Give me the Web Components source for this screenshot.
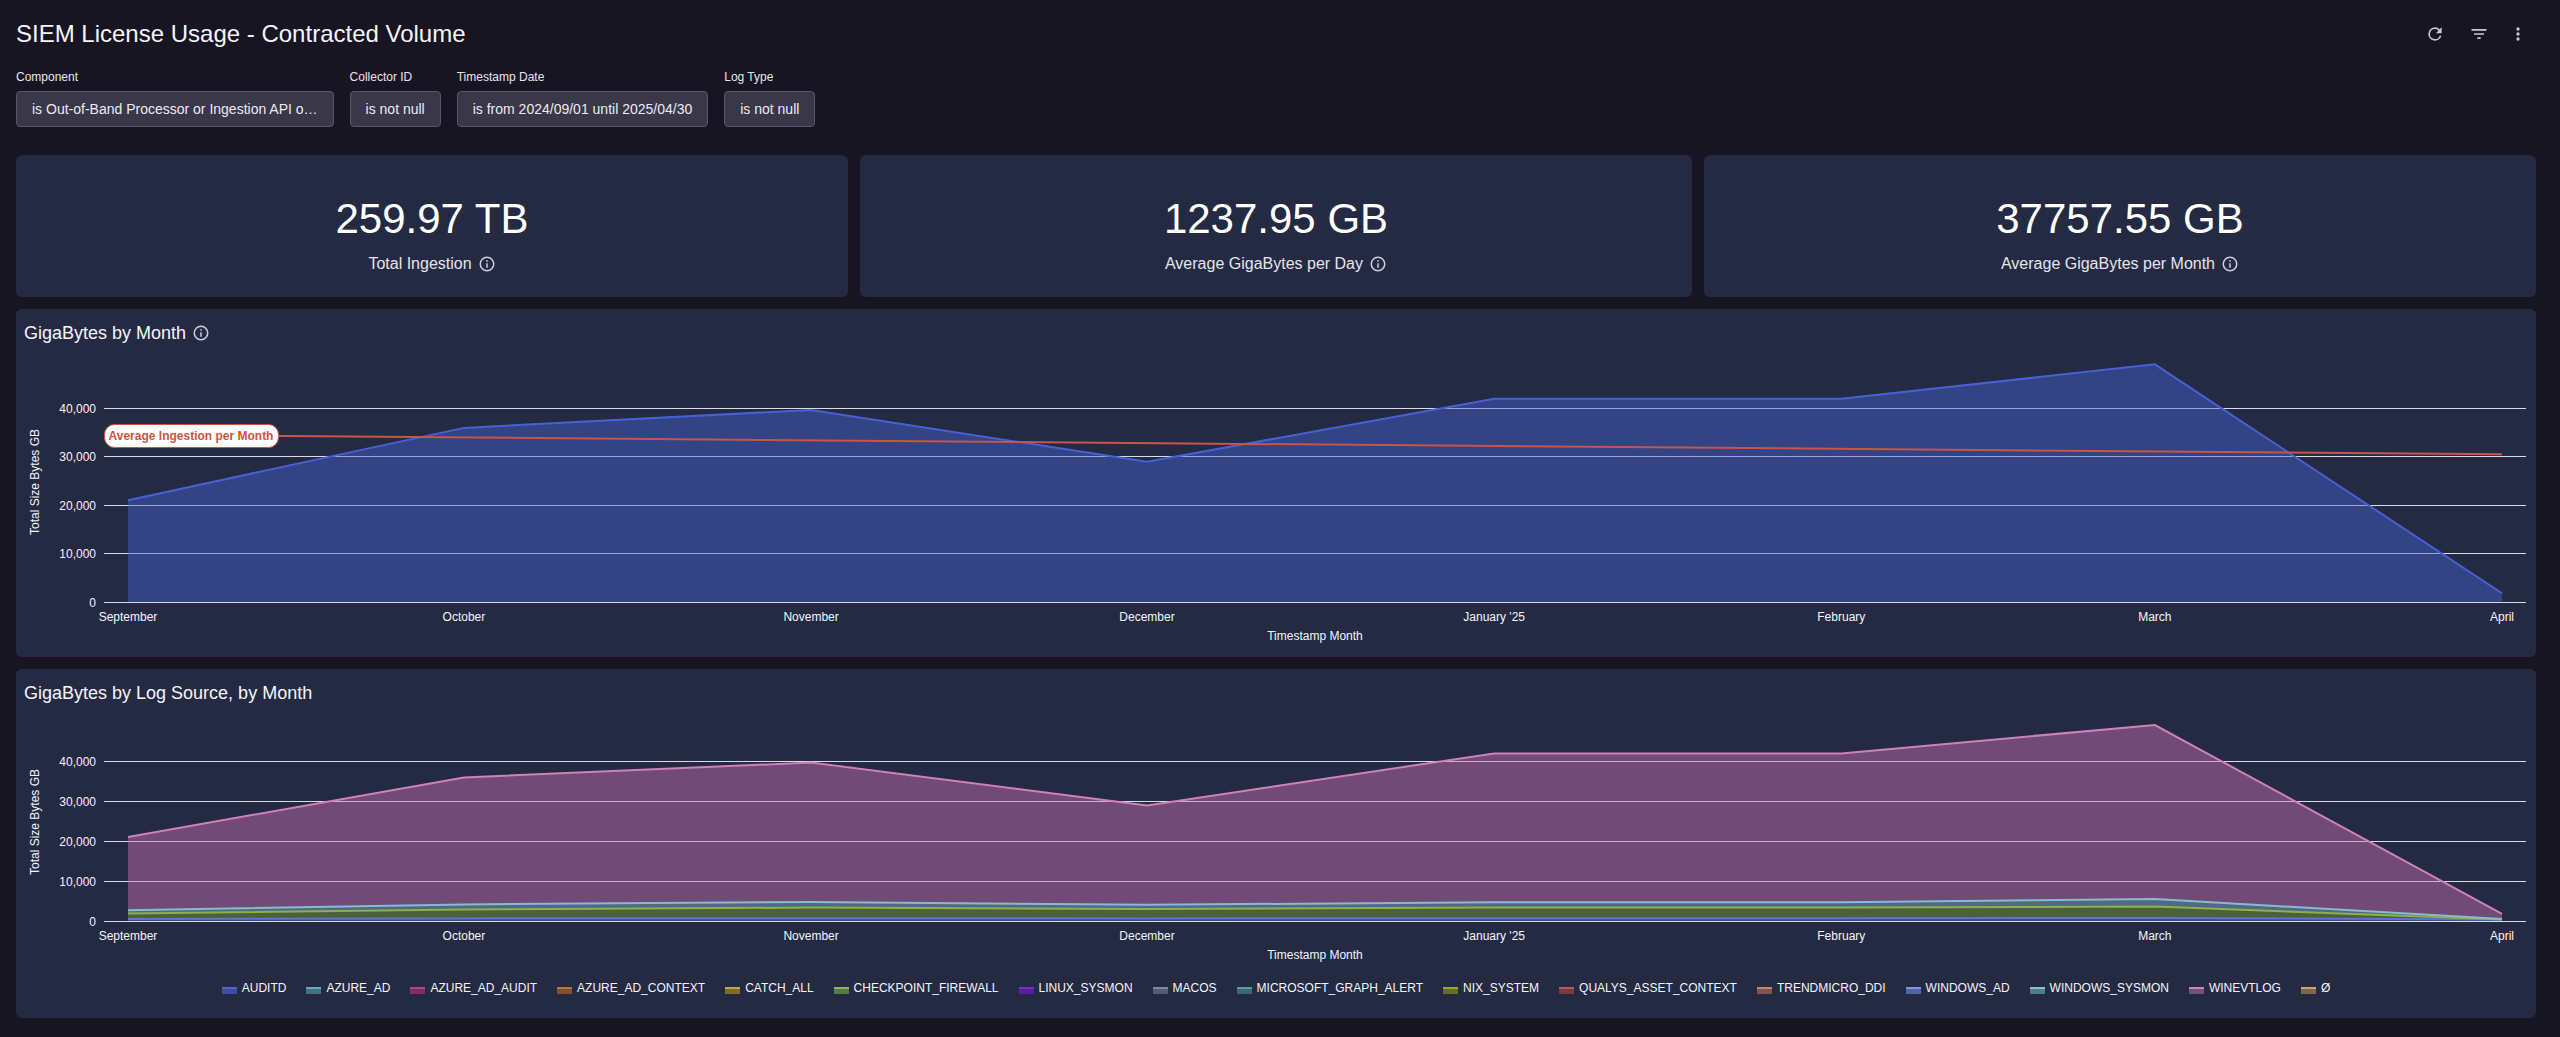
<!DOCTYPE html>
<html lang="en">
<head>
<meta charset="utf-8">
<meta name="viewport" content="width=device-width, initial-scale=1">
<title>SIEM License Usage - Contracted Volume</title>
<style>
  html { background: #181523; }
  body {
    margin: 0;
    color: #f4f4fa;
    font-family: "Liberation Sans", Arial, sans-serif;
    --panel: #252a43;
    --muted: #cfcddb;
  }
</style>
</head>
<body>
<siem-dashboard></siem-dashboard>

<script>
const ICONS = {
  refresh: 'M17.65 6.35A7.96 7.96 0 0 0 12 4a8 8 0 1 0 7.73 10h-2.08A6 6 0 1 1 12 6c1.66 0 3.14.69 4.22 1.78L13 11h7V4z',
  filter: 'M10 18h4v-2h-4zM3 6v2h18V6zm3 7h12v-2H6z',
  more: 'M12 8a2 2 0 1 0 0-4 2 2 0 0 0 0 4zm0 2a2 2 0 1 0 0 4 2 2 0 0 0 0-4zm0 6a2 2 0 1 0 0 4 2 2 0 0 0 0-4z',
  info: 'M11 7h2v2h-2zm0 4h2v6h-2zm1-9a10 10 0 1 0 0 20 10 10 0 0 0 0-20zm0 18a8 8 0 1 1 0-16 8 8 0 0 1 0 16z'
};

class DashIcon extends HTMLElement {
  connectedCallback() {
    if (this.shadowRoot) return;
    this.attachShadow({ mode: 'open' }).innerHTML = `
      <style>
        :host { display: block; width: 20px; height: 20px; flex: none; }
        svg { display: block; width: 100%; height: 100%; fill: currentColor; }
      </style>
      <svg viewBox="0 0 24 24" aria-hidden="true"><path d="${ICONS[this.getAttribute('name')]}"/></svg>`;
  }
}
customElements.define('dash-icon', DashIcon);

class InfoButton extends HTMLElement {
  connectedCallback() {
    if (this.shadowRoot) return;
    this.attachShadow({ mode: 'open' }).innerHTML = `
      <style>
        :host { display: block; flex: none; }
        button { display: block; padding: 0; border: 0; background: none; color: var(--muted); cursor: pointer; }
        dash-icon { width: 18px; height: 18px; }
      </style>
      <button type="button" aria-label="More information"><dash-icon name="info"></dash-icon></button>`;
  }
}
customElements.define('info-button', InfoButton);

class FilterChip extends HTMLElement {
  connectedCallback() {
    if (this.shadowRoot) return;
    this.attachShadow({ mode: 'open' }).innerHTML = `
      <style>
        :host { display: flex; flex-direction: column; align-items: flex-start; gap: 6px; min-width: 0; }
        label { font-size: 12px; line-height: 16px; color: #e6e5ee; }
        button {
          box-sizing: border-box; height: 36px; max-width: 320px; padding: 0 15px;
          border: 1px solid #57566a; border-radius: 4px; background: #393748; color: #eceaf4;
          font: 14px/20px "Liberation Sans", Arial, sans-serif;
          overflow: hidden; text-overflow: ellipsis; white-space: nowrap; cursor: pointer;
        }
      </style>
      <label for="value">${this.getAttribute('label')}</label>
      <button type="button" id="value"><slot></slot></button>`;
  }
}
customElements.define('filter-chip', FilterChip);

class MetricCard extends HTMLElement {
  connectedCallback() {
    if (this.shadowRoot) return;
    this.attachShadow({ mode: 'open' }).innerHTML = `
      <style>
        :host {
          display: flex; flex-direction: column; align-items: center; gap: 11px;
          padding: 40px 16px 23px; border-radius: 6px; background: var(--panel);
        }
        .value { font-size: 42px; line-height: 48px; color: #fff; }
        .caption { display: flex; align-items: center; gap: 6px; font-size: 16px; line-height: 20px; color: #e4e4ee; }
      </style>
      <div class="value"><slot></slot></div>
      <div class="caption"><span>${this.getAttribute('caption')}</span><info-button></info-button></div>`;
  }
}
customElements.define('metric-card', MetricCard);

class ChartPanel extends HTMLElement {
  connectedCallback() {
    if (this.shadowRoot) return;
    this.attachShadow({ mode: 'open' }).innerHTML = `
      <style>
        :host { display: block; padding-top: 13px; border-radius: 6px; background: var(--panel); }
        header { display: flex; align-items: center; gap: 6px; padding: 0 8px; }
        h2 { margin: 0; font-size: 18px; font-weight: 400; line-height: 22px; }
      </style>
      <header><h2>${this.getAttribute('heading')}</h2>${this.hasAttribute('info') ? '<info-button></info-button>' : ''}</header>
      <slot></slot>`;
  }
}
customElements.define('chart-panel', ChartPanel);

const MONTHS = [
  ['September', 0], ['October', 30], ['November', 61], ['December', 91],
  ["January '25", 122], ['February', 153], ['March', 181], ['April', 212]
];
const TOTALS = [21000, 35900, 39600, 28900, 41900, 41900, 49000, 1800];

/* Each layer lists the cumulative top of its band, month by month. */
const CHARTS = {
  month: {
    height: 313, top: 64, zero: 258, monthY: 277, titleY: 296, axisMid: 138,
    layers: [{ color: '#4661d5', tops: TOTALS }],
    trend: { from: 34500, to: 30450, label: 'Average Ingestion per Month' }
  },
  source: {
    height: 261, top: 57, zero: 217, monthY: 236, titleY: 255, axisMid: 118,
    layers: [
      { color: '#5c73d8', tops: [500, 650, 700, 650, 700, 700, 750, 350] },
      { color: '#8db04c', fill: '#7aa535', tops: [1900, 2850, 3350, 3000, 3350, 3400, 3600, 380] },
      { color: '#84bcd0', fill: '#8ab6d4', tops: [2700, 4150, 4750, 4050, 4700, 4700, 5500, 500] },
      { color: '#d07fbf', fill: '#ce73b6', tops: TOTALS }
    ]
  }
};

class AreaChart extends HTMLElement {
  connectedCallback() {
    if (this.shadowRoot) return;
    this.attachShadow({ mode: 'open' }).innerHTML = `
      <style>
        :host { display: block; }
        svg { display: block; width: 100%; }
        text { font-size: 12px; fill: #f4f4fa; }
        .end { text-anchor: end; }
        .mid { text-anchor: middle; }
        .grid { stroke: #d9dbe8; stroke-width: 1; }
        .line { fill: none; stroke-width: 2; }
        .area { fill-opacity: .45; }
        .tag { fill: #fff; stroke: #d0533c; }
        .tag-text { font-weight: 700; fill: #d0533c; text-anchor: middle; }
      </style>
      <svg role="img"></svg>`;
    this.draw();
    new ResizeObserver(() => this.draw()).observe(this);
  }

  draw() {
    const c = CHARTS[this.getAttribute('data')];
    const w = this.clientWidth;
    if (!w || w === this.drawn) return;
    this.drawn = w;
    const left = 88, right = w - 10, start = left + 24, end = right - 24;
    const x = day => start + (end - start) * day / 212;
    const y = value => c.zero - (c.zero - c.top) * value / 40000;
    let out = '';

    for (let v = 0; v <= 40000; v += 10000) {
      const gy = Math.floor(y(v)) + 0.5;
      out += `<line class="grid" x1="${left}" x2="${right}" y1="${gy}" y2="${gy}"/>`;
      out += `<text class="end" x="${left - 8}" y="${gy + 4.5}">${v.toLocaleString('en-US')}</text>`;
    }

    let below = MONTHS.map(() => 0), lines = '';
    for (const layer of c.layers) {
      const tops = layer.tops.map((v, i) => `${x(MONTHS[i][1])},${y(v)}`);
      const base = below.map((v, i) => `${x(MONTHS[i][1])},${y(v)}`).reverse();
      out += `<polygon class="area" fill="${layer.fill || layer.color}" points="${tops.concat(base).join(' ')}"/>`;
      lines += `<polyline class="line" stroke="${layer.color}" points="${tops.join(' ')}"/>`;
      below = layer.tops;
    }
    out += lines;

    for (const [name, day] of MONTHS) {
      out += `<text class="mid" x="${x(day)}" y="${c.monthY}">${name}</text>`;
    }
    out += `<text class="mid" x="${(left + right) / 2}" y="${c.titleY}">Timestamp Month</text>`;
    out += `<text class="mid" transform="translate(23 ${c.axisMid}) rotate(-90)">Total Size Bytes GB</text>`;

    if (c.trend) {
      const t = c.trend;
      out += `<line class="line" stroke="#c8554a" x1="${start}" y1="${y(t.from)}" x2="${end}" y2="${y(t.to)}"/>`;
      out += `<rect class="tag" x="${left + 0.5}" y="80.5" width="174" height="23" rx="10"/>`;
      out += `<text class="tag-text" x="${left + 87}" y="96">${t.label}</text>`;
    }

    const svg = this.shadowRoot.querySelector('svg');
    svg.setAttribute('height', c.height);
    svg.setAttribute('viewBox', `0 0 ${w} ${c.height}`);
    svg.innerHTML = out;
  }
}
customElements.define('area-chart', AreaChart);

const SOURCES = [
  ['AUDITD', '#5563cc', '#3f4da0'], ['AZURE_AD', '#6ba9bd', '#437084'],
  ['AZURE_AD_AUDIT', '#b8428a', '#7f2d68'], ['AZURE_AD_CONTEXT', '#bd7435', '#805030'],
  ['CATCH_ALL', '#c4a63a', '#7f6d2f'], ['CHECKPOINT_FIREWALL', '#96b060', '#577a42'],
  ['LINUX_SYSMON', '#7a30c4', '#56209c'], ['MACOS', '#848799', '#555a70'],
  ['MICROSOFT_GRAPH_ALERT', '#5a98a4', '#3c6676'], ['NIX_SYSTEM', '#a0a436', '#656b30'],
  ['QUALYS_ASSET_CONTEXT', '#c0564e', '#783a45'], ['TRENDMICRO_DDI', '#d0806a', '#80544f'],
  ['WINDOWS_AD', '#8494e4', '#5363a4'], ['WINDOWS_SYSMON', '#86c2d0', '#4f7a90'],
  ['WINEVTLOG', '#cf80bf', '#74507e'], ['Ø', '#d0a468', '#7c684f']
];

class ChartLegend extends HTMLElement {
  connectedCallback() {
    if (this.shadowRoot) return;
    this.attachShadow({ mode: 'open' }).innerHTML = `
      <style>
        :host { display: block; padding: 15px 8px 22px; }
        ul { display: flex; flex-wrap: wrap; justify-content: center; gap: 4px 20px; margin: 0; padding: 0; list-style: none; }
        li { display: flex; align-items: center; gap: 5px; font-size: 12px; line-height: 16px; }
        i { width: 15px; height: 5px; margin-top: 4px; border-top: 2px solid; }
      </style>
      <ul>${SOURCES.map(([n, l, f]) => `<li><i style="border-color:${l};background:${f}"></i>${n}</li>`).join('')}</ul>`;
  }
}
customElements.define('chart-legend', ChartLegend);

class SiemDashboard extends HTMLElement {
  connectedCallback() {
    if (this.shadowRoot) return;
    this.attachShadow({ mode: 'open' }).innerHTML = `
      <style>
        :host { display: block; padding: 16px 24px 19px 16px; }
        header { display: flex; align-items: center; justify-content: space-between; min-height: 36px; }
        h1 { margin: 0; font-size: 24px; font-weight: 400; line-height: 28px; }
        .actions { display: flex; gap: 4px; padding-right: 3px; }
        .actions button {
          display: grid; place-items: center; width: 40px; height: 36px; padding: 0;
          border: 0; background: none; color: #c9c6d6; cursor: pointer;
        }
        .actions button:last-child { width: 30px; }
        .filters { display: flex; flex-wrap: wrap; gap: 16px; margin: 17px 0 28px; }
        main { display: grid; gap: 12px; }
        .metrics { display: grid; grid-template-columns: repeat(3, minmax(0, 1fr)); gap: 12px; }
      </style>
      <header>
        <h1>SIEM License Usage - Contracted Volume</h1>
        <div class="actions">
          <button type="button" aria-label="Refresh"><dash-icon name="refresh"></dash-icon></button>
          <button type="button" aria-label="Filters"><dash-icon name="filter"></dash-icon></button>
          <button type="button" aria-label="More options"><dash-icon name="more"></dash-icon></button>
        </div>
      </header>
      <div class="filters">
        <filter-chip label="Component">is Out-of-Band Processor or Ingestion API o…</filter-chip>
        <filter-chip label="Collector ID">is not null</filter-chip>
        <filter-chip label="Timestamp Date">is from 2024/09/01 until 2025/04/30</filter-chip>
        <filter-chip label="Log Type">is not null</filter-chip>
      </div>
      <main>
        <section class="metrics">
          <metric-card caption="Total Ingestion">259.97 TB</metric-card>
          <metric-card caption="Average GigaBytes per Day">1237.95 GB</metric-card>
          <metric-card caption="Average GigaBytes per Month">37757.55 GB</metric-card>
        </section>
        <chart-panel heading="GigaBytes by Month" info><area-chart data="month"></area-chart></chart-panel>
        <chart-panel heading="GigaBytes by Log Source, by Month">
          <area-chart data="source"></area-chart>
          <chart-legend></chart-legend>
        </chart-panel>
      </main>`;
  }
}
customElements.define('siem-dashboard', SiemDashboard);
</script>
</body>
</html>
